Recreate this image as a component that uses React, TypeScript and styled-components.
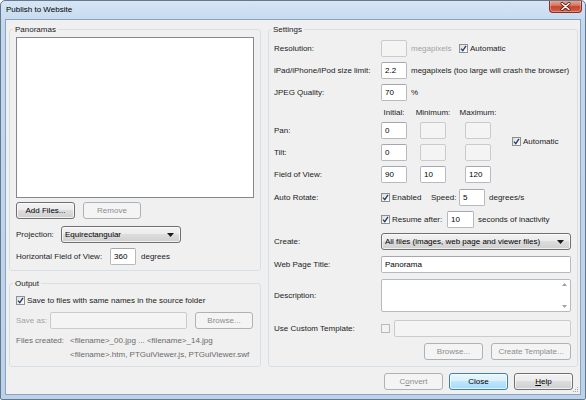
import styled, { createGlobalStyle } from "styled-components";

const GlobalStyle = createGlobalStyle`
  html, body {
    margin: 0;
    padding: 0;
    background: #fff;
  }
  body {
    font-family: "Liberation Sans", Arial, sans-serif;
    font-size: 8px;
    color: #1b1b1b;
  }
  * {
    box-sizing: border-box;
  }
`;

const Window = styled.div`
  width: 586px;
  height: 400px;
  display: flex;
  flex-direction: column;
  border: 1px solid #66788c;
  border-radius: 5px 5px 2px 2px;
  background: linear-gradient(180deg, #d6e5f5 0%, #c3d8ee 6%, #bcd2ea 100%);
  overflow: hidden;
`;

const TitleBar = styled.div`
  height: 18px;
  flex: none;
  display: flex;
  align-items: flex-start;
  padding-left: 5px;
`;

const Title = styled.div`
  line-height: 18px;
  color: #000;
`;

const CloseButton = styled.div`
  margin-left: auto;
  margin-right: 3px;
  margin-top: -1px;
  width: 33px;
  height: 13px;
  display: flex;
  align-items: center;
  justify-content: center;
  border: 1px solid #8a2e22;
  border-top: none;
  border-radius: 0 0 4px 4px;
  background: linear-gradient(180deg, #eab0a2 0%, #d9755f 45%, #c6462e 55%, #d2604a 100%);
  box-shadow: inset 0 0 0 1px rgba(255, 255, 255, 0.3);
`;

const Client = styled.div`
  position: relative;
  flex: 1;
  margin: 0 4px 4px 4px;
  border: 1px solid #8aa3c0;
  background: #f0f0f0;
  display: flex;
  flex-direction: column;
  padding: 4px 3px 0 3px;
`;

const Main = styled.div`
  display: grid;
  grid-template-columns: 252px 310px;
  column-gap: 7px;
  height: 343px;
`;

const LeftColumn = styled.div`
  display: flex;
  flex-direction: column;
  gap: 7px;
`;

const GroupBox = styled.fieldset<{ $h: number; $pl?: number }>`
  margin: 0;
  min-width: 0;
  height: ${(p) => p.$h}px;
  padding: 0 6px 0 ${(p) => p.$pl ?? 6}px;
  border: 1px solid #d5dfe5;
  border-radius: 3px;
  display: flex;
  flex-direction: column;
`;

const Legend = styled.legend`
  padding: 0 2px;
  margin-left: -3px;
  line-height: 11px;
  color: #1b1b1b;
`;

const ListBox = styled.div`
  margin-top: 2px;
  height: 161px;
  flex: none;
  background: #fff;
  border: 1px solid #828790;
`;

const Row = styled.div<{ $mt?: number; $h?: number; $end?: boolean }>`
  display: flex;
  align-items: center;
  flex: none;
  height: ${(p) => p.$h ?? 17}px;
  margin-top: ${(p) => p.$mt ?? 0}px;
  justify-content: ${(p) => (p.$end ? "flex-end" : "flex-start")};
  gap: ${(p) => (p.$end ? 8 : 0)}px;
`;

const Label = styled.span<{ $w?: number; $ml?: number; $muted?: boolean }>`
  flex: none;
  white-space: nowrap;
  width: ${(p) => (p.$w ? `${p.$w}px` : "auto")};
  margin-left: ${(p) => p.$ml ?? 0}px;
  color: ${(p) => (p.$muted ? "#a3a3a3" : "#1b1b1b")};
`;

const Button = styled.button<{ $w: number; $ml?: number; $primary?: boolean }>`
  flex: none;
  width: ${(p) => p.$w}px;
  height: 17px;
  margin: 0 0 0 ${(p) => p.$ml ?? 0}px;
  padding: 0;
  font: inherit;
  color: #000;
  border: 1px solid ${(p) => (p.$primary ? "#3c7fb1" : "#707070")};
  border-radius: 3px;
  background: ${(p) =>
    p.$primary
      ? "linear-gradient(180deg, #eaf6fd 0%, #d9f0fc 50%, #bee6fd 50%, #a7d9f5 100%)"
      : "linear-gradient(180deg, #f2f2f2 0%, #ebebeb 50%, #dddddd 50%, #cfcfcf 100%)"};
  box-shadow: inset 0 0 0 1px rgba(255, 255, 255, 0.7);

  &:disabled {
    color: #8d8d8d;
    border-color: #adb2b5;
    background: #f4f4f4;
    box-shadow: none;
  }
`;

const TextBox = styled.input<{ $w: number; $ml?: number }>`
  flex: none;
  width: ${(p) => p.$w}px;
  height: 17px;
  margin: 0 0 0 ${(p) => p.$ml ?? 0}px;
  padding: 0 3px;
  font: inherit;
  color: #000;
  background: #fff;
  border: 1px solid #b5bac1;
  border-top-color: #a3a8b0;
  border-radius: 2px;
  outline: none;

  &:disabled {
    background: #f4f4f4;
    border-color: #cbcbcb;
  }
`;

const Select = styled.div<{ $w: number }>`
  flex: none;
  width: ${(p) => p.$w}px;
  height: 17px;
  display: flex;
  align-items: center;
  justify-content: space-between;
  padding: 0 6px 0 3px;
  border: 1px solid #707070;
  border-radius: 3px;
  background: linear-gradient(180deg, #f2f2f2 0%, #ebebeb 50%, #dddddd 50%, #cfcfcf 100%);
  box-shadow: inset 0 0 0 1px rgba(255, 255, 255, 0.7);
  color: #000;
`;

const TextArea = styled.div<{ $w: number; $h: number }>`
  flex: none;
  width: ${(p) => p.$w}px;
  height: ${(p) => p.$h}px;
  display: flex;
  justify-content: flex-end;
  background: #fff;
  border: 1px solid #b5bac1;
  border-radius: 2px;
`;

const ScrollTrack = styled.div`
  width: 12px;
  display: flex;
  flex-direction: column;
  justify-content: space-between;
  align-items: center;
  padding: 3px 0;
`;

const CheckItem = styled.span<{ $w?: number; $ml?: number }>`
  flex: none;
  display: inline-flex;
  align-items: center;
  gap: 2px;
  white-space: nowrap;
  width: ${(p) => (p.$w ? `${p.$w}px` : "auto")};
  margin-left: ${(p) => p.$ml ?? 0}px;
`;

const Box = styled.span<{ $disabled?: boolean }>`
  width: 9px;
  height: 9px;
  flex: none;
  display: inline-flex;
  align-items: center;
  justify-content: center;
  border: 1px solid ${(p) => (p.$disabled ? "#b9b9b9" : "#8e8f8f")};
  background: ${(p) =>
    p.$disabled ? "#f2f2f2" : "linear-gradient(135deg, #dcdcdc 0%, #f6f6f6 70%, #ffffff 100%)"};
`;

const AngleGrid = styled.div`
  display: grid;
  grid-template-columns: 107px 39px 45px 45px 1fr;
  grid-template-rows: 9px 17px 17px 17px;
  row-gap: 5px;
  margin-top: 7px;
  align-items: center;
`;

const HeadCell = styled.div`
  width: 26px;
  display: flex;
  justify-content: center;
  white-space: nowrap;
  line-height: 9px;
`;

const SpanCell = styled.div`
  grid-column: 5;
  grid-row: 2 / 4;
  margin-left: 2px;
`;

const FilesInfo = styled.div`
  display: grid;
  grid-template-columns: 54px 1fr;
  line-height: 14px;
  margin-top: 5px;
  color: #6a6a6a;
  white-space: nowrap;
`;

const Footer = styled.div`
  display: flex;
  justify-content: flex-end;
  gap: 6px;
  margin-top: 6px;
  padding-right: 4px;
`;

const Grip = styled.svg`
  position: absolute;
  right: 1px;
  bottom: 1px;
`;

function Check({ checked = false, disabled = false }: { checked?: boolean; disabled?: boolean }) {
  return (
    <Box $disabled={disabled}>
      {checked && (
        <svg width="7" height="7" viewBox="0 0 7 7">
          <path d="M1 3.6 L2.8 5.6 L6 0.8" fill="none" stroke="#24406e" strokeWidth="1.4" />
        </svg>
      )}
    </Box>
  );
}

function Arrow() {
  return (
    <svg width="7" height="4" viewBox="0 0 7 4">
      <path d="M0 0 H7 L3.5 4 Z" fill="#1b1b1b" />
    </svg>
  );
}

function SmallArrow({ up, color = "#a0a0a0" }: { up?: boolean; color?: string }) {
  return (
    <svg width="5" height="3" viewBox="0 0 5 3">
      <path d={up ? "M0 3 H5 L2.5 0 Z" : "M0 0 H5 L2.5 3 Z"} fill={color} />
    </svg>
  );
}

export default function App() {
  return (
    <>
      <GlobalStyle />
      <Window>
        <TitleBar>
          <Title>Publish to Website</Title>
          <CloseButton>
            <svg width="11" height="9" viewBox="0 0 11 9">
              <path d="M2 1.5 L9 7.5 M9 1.5 L2 7.5" stroke="#5a1a12" strokeWidth="3" strokeLinecap="round" />
              <path d="M2 1.5 L9 7.5 M9 1.5 L2 7.5" stroke="#ffffff" strokeWidth="1.6" strokeLinecap="round" />
            </svg>
          </CloseButton>
        </TitleBar>

        <Client>
          <Main>
            <LeftColumn>
              <GroupBox $h={247}>
                <Legend>Panoramas</Legend>
                <ListBox />
                <Row $mt={4}>
                  <Button $w={59}>Add Files...</Button>
                  <Button $w={58} $ml={8} disabled>
                    Remove
                  </Button>
                </Row>
                <Row $mt={7}>
                  <Label $w={45}>Projection:</Label>
                  <Select $w={120}>
                    <span>Equirectangular</span>
                    <Arrow />
                  </Select>
                </Row>
                <Row $mt={5}>
                  <Label $w={94}>Horizontal Field of View:</Label>
                  <TextBox $w={26} defaultValue="360" />
                  <Label $ml={5}>degrees</Label>
                </Row>
              </GroupBox>

              <GroupBox $h={89}>
                <Legend>Output</Legend>
                <Row $mt={5} $h={13}>
                  <CheckItem>
                    <Check checked />
                    Save to files with same names in the source folder
                  </CheckItem>
                </Row>
                <Row $mt={5}>
                  <Label $w={34} $muted>
                    Save as:
                  </Label>
                  <TextBox $w={137} disabled />
                  <Button $w={58} $ml={8} disabled>
                    Browse...
                  </Button>
                </Row>
                <FilesInfo>
                  <span>Files created:</span>
                  <span>&lt;filename&gt;_00.jpg ... &lt;filename&gt;_14.jpg</span>
                  <span />
                  <span>&lt;filename&gt;.htm, PTGuiViewer.js, PTGuiViewer.swf</span>
                </FilesInfo>
              </GroupBox>
            </LeftColumn>

            <GroupBox $h={343} $pl={5}>
              <Legend>Settings</Legend>
              <Row $mt={5}>
                <Label $w={107}>Resolution:</Label>
                <TextBox $w={26} disabled />
                <Label $w={48} $ml={4} $muted>
                  megapixels
                </Label>
                <CheckItem>
                  <Check checked />
                  Automatic
                </CheckItem>
              </Row>
              <Row $mt={5}>
                <Label $w={107}>iPad/iPhone/iPod size limit:</Label>
                <TextBox $w={26} defaultValue="2.2" />
                <Label $ml={4}>megapixels (too large will crash the browser)</Label>
              </Row>
              <Row $mt={5}>
                <Label $w={107}>JPEG Quality:</Label>
                <TextBox $w={26} defaultValue="70" />
                <Label $ml={4}>%</Label>
              </Row>

              <AngleGrid>
                <span />
                <HeadCell>Initial:</HeadCell>
                <HeadCell>Minimum:</HeadCell>
                <HeadCell>Maximum:</HeadCell>
                <span />
                <Label>Pan:</Label>
                <TextBox $w={26} defaultValue="0" />
                <TextBox $w={26} disabled />
                <TextBox $w={26} disabled />
                <SpanCell>
                  <CheckItem>
                    <Check checked />
                    Automatic
                  </CheckItem>
                </SpanCell>
                <Label>Tilt:</Label>
                <TextBox $w={26} defaultValue="0" />
                <TextBox $w={26} disabled />
                <TextBox $w={26} disabled />
                <Label>Field of View:</Label>
                <TextBox $w={26} defaultValue="90" />
                <TextBox $w={26} defaultValue="10" />
                <TextBox $w={26} defaultValue="120" />
              </AngleGrid>

              <Row $mt={6}>
                <Label $w={107}>Auto Rotate:</Label>
                <CheckItem $w={50}>
                  <Check checked />
                  Enabled
                </CheckItem>
                <Label $w={28}>Speed:</Label>
                <TextBox $w={26} defaultValue="5" />
                <Label $ml={4}>degrees/s</Label>
              </Row>
              <Row $mt={5}>
                <Label $w={107} />
                <CheckItem $w={66}>
                  <Check checked />
                  Resume after:
                </CheckItem>
                <TextBox $w={27} defaultValue="10" />
                <Label $ml={4}>seconds of inactivity</Label>
              </Row>
              <Row $mt={5}>
                <Label $w={107}>Create:</Label>
                <Select $w={190}>
                  <span>All files (images, web page and viewer files)</span>
                  <Arrow />
                </Select>
              </Row>
              <Row $mt={6}>
                <Label $w={107}>Web Page Title:</Label>
                <TextBox $w={190} defaultValue="Panorama" />
              </Row>
              <Row $mt={6} $h={33}>
                <Label $w={107}>Description:</Label>
                <TextArea $w={190} $h={33}>
                  <ScrollTrack>
                    <SmallArrow up />
                    <SmallArrow />
                  </ScrollTrack>
                </TextArea>
              </Row>
              <Row $mt={8}>
                <Label $w={107}>Use Custom Template:</Label>
                <Check disabled />
                <TextBox $w={177} $ml={4} disabled />
              </Row>
              <Row $mt={6} $end>
                <Button $w={59} disabled>
                  Browse...
                </Button>
                <Button $w={80} disabled>
                  Create Template...
                </Button>
              </Row>
            </GroupBox>
          </Main>

          <Footer>
            <Button $w={59} disabled>
              C<u>o</u>nvert
            </Button>
            <Button $w={59} $primary>
              Close
            </Button>
            <Button $w={59}>
              <u>H</u>elp
            </Button>
          </Footer>

          <Grip width="8" height="8" viewBox="0 0 8 8">
            <rect x="6" y="2" width="1" height="1" fill="#a5a5a5" />
            <rect x="4" y="4" width="1" height="1" fill="#a5a5a5" />
            <rect x="6" y="4" width="1" height="1" fill="#a5a5a5" />
            <rect x="2" y="6" width="1" height="1" fill="#a5a5a5" />
            <rect x="4" y="6" width="1" height="1" fill="#a5a5a5" />
            <rect x="6" y="6" width="1" height="1" fill="#a5a5a5" />
          </Grip>
        </Client>
      </Window>
    </>
  );
}
